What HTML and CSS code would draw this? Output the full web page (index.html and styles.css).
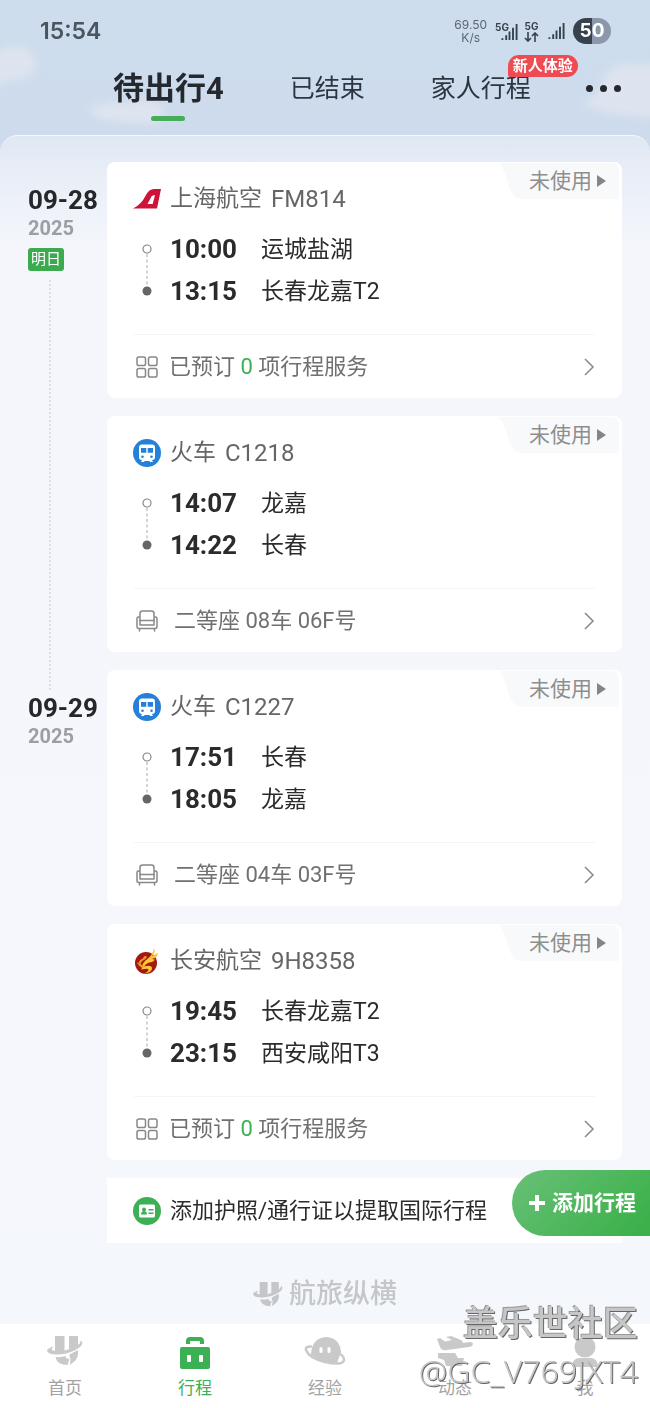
FILE: index.html
```html
<!DOCTYPE html>
<html lang="zh-CN">
<head>
<meta charset="utf-8">
<meta name="viewport" content="width=device-width, initial-scale=1">
<title>行程</title>
<link rel="stylesheet" href="styles.css">
</head>
<body>
<svg class="sprite" aria-hidden="true">
  <symbol id="i-grid" viewBox="0 0 24 24"><g fill="none" stroke="#888" stroke-width="1.5"><rect x="2" y="2" width="8.500" height="8.500" rx="1.8"/><rect x="13.500" y="2" width="8.500" height="8.500" rx="1.8"/><rect x="2" y="13.500" width="8.500" height="8.500" rx="1.8"/><rect x="13.500" y="13.500" width="8.500" height="8.500" rx="1.8"/></g></symbol>
  <symbol id="i-seat" viewBox="0 0 24 24"><g fill="none" stroke="#888" stroke-width="1.5" stroke-linejoin="round" stroke-linecap="round"><path d="M5 8V4.500Q5 2 7.500 2h9Q19 2 19 4.500V8"/><path d="M5 16V9.500Q5 8 3.500 8T2 9.500V17.500Q2 19.500 4 19.500H20Q22 19.500 22 17.500V9.500Q22 8 20.500 8T19 9.500V16Z"/><path d="M5 11.500h14M4.500 20v2M19.500 20v2"/></g></symbol>
  <symbol id="i-next" viewBox="0 0 12 20"><path d="M2 2l8 8-8 8" fill="none" stroke="#8c8c8c" stroke-width="1.6"/></symbol>
  <symbol id="i-train" viewBox="0 0 28 28"><circle cx="14" cy="14" r="14" fill="#2480d8"/><path d="M9 5.500h10q3 0 3 3V18q0 3-3 3l1 2h-3l-.5-1h-5l-.5 1H8l1-2q-3 0-3-3V8.500q0-3 3-3z" fill="#fff"/><path d="M8 9h5.300v4.700H8zM14.700 9H20v4.700h-5.300z" fill="#2480d8"/><circle cx="9.500" cy="17.700" r="1.300" fill="#2480d8"/><circle cx="18.500" cy="17.700" r="1.300" fill="#2480d8"/></symbol>
  <symbol id="i-fm" viewBox="0 0 28 28"><path d="M0 23.500Q8 20 13 10 16 4 21 4h7l-4 19.500z" fill="#cf1238"/><path d="M14.500 19l4-7.500q1-1.500 3.500-1.500l-2.300 9z" fill="#fff"/></symbol>
  <symbol id="i-9h" viewBox="0 0 28 28"><circle cx="13" cy="16" r="11" fill="#a51710"/><path d="M21 1q2 4-2 8l6-3q0 4-6 6l3 .5q-2 3-6 3-3 1-5 4 8-2 8 2 0 4-9 5.500 5-2 5.500-4 .5-2-7-.5 0-5 4-9 5-4 6-6 2-3 2.500-6.500z" fill="#fbc638"/><path d="M11 9.500q2-1 3 .5-1 2-4 3.500-3 2-2 5-2-1-2-4 1-2 4-3zM4 15l7 4.500-1 1.500q-5-2-6-6z" fill="#ee9a2a"/></symbol>
  <symbol id="i-route" viewBox="0 0 12 56"><circle cx="6" cy="7" r="4" fill="#fff" stroke="#888" stroke-width="1.200"/><path d="M6 12v32" stroke="#aaa" stroke-dasharray="3 2.500"/><circle cx="6" cy="49" r="4.500" fill="#666"/></symbol>
  <symbol id="i-signal" viewBox="0 0 18 18"><path d="M1.500 17v-2M5.500 17v-5M9 17V8M12.700 17V4M16.500 17V0" stroke="#38424c" stroke-width="2" fill="none"/></symbol>
  <symbol id="i-brand" viewBox="0 0 36 30"><g fill="currentColor"><path d="M8 0h9.500v15Q12 16.500 8 16zM22 0h9v10.500q-4 2-9 3.300z"/><path d="M7 10.500Q3 13 6 14.500 18 17 31 9q3-2 2.500-4.500 4 2.500-.5 6.500-8 6.500-21 7.500Q2 19 0 15q0-3 7-4.500z"/><path d="M8.500 21q6 .5 10-1 0 3 4 3l-2 6Q10 29 8.500 21zM22.500 18.500L31 14v4q0 6-8.500 11 1-3.500 1-6-1-1-1-4.500z"/></g></symbol>
  <symbol id="i-case" viewBox="0 0 32 34"><path d="M9 8V5q0-2 2-2h10q2 0 2 2v3" fill="none" stroke="currentColor" stroke-width="4"/><rect x="1" y="11" width="30" height="22" rx="2" fill="currentColor"/><rect x="8" y="19" width="4" height="7" rx="1" fill="#fff"/><rect x="20" y="19" width="4" height="7" rx="1" fill="#fff"/></symbol>
  <symbol id="i-planet" viewBox="0 0 42 30"><path d="M7 18Q8 2 22 1q14 1 15 15l-4 11Q18 27 7 19z" fill="currentColor"/><path d="M8 10.500Q1 10 2 14q3 8 19 12 18 4 19-2 0-4-4-6" fill="none" stroke="currentColor" stroke-width="2.500"/><rect x="15.500" y="11" width="3" height="6" rx="1.500" fill="#fff"/><rect x="23.500" y="11" width="3" height="6" rx="1.500" fill="#fff"/></symbol>
  <symbol id="i-plane" viewBox="0 0 36 32"><path d="M0 3l3-1 5 3.500 7-1.500L9 1l5-1 10 4q2 1 2 3l6-1q4 0 4 2-1 3-4 3L10 14q-5 1-7-3zM1 17h17l3 5h6l-2 8H9l-2-6-6-2z" fill="currentColor"/></symbol>
  <symbol id="i-me" viewBox="0 0 28 32"><circle cx="14" cy="11" r="10.500" fill="currentColor"/><path d="M1 31q0-9 8-9h10q8 0 8 9z" fill="currentColor"/></symbol>
</svg>

<header class="top">
  <svg class="clouds" viewBox="0 0 650 150" preserveAspectRatio="none" aria-hidden="true">
    <defs><filter id="soft"><feGaussianBlur stdDeviation="4"/></filter></defs>
    <g fill="#e3e7ef" filter="url(#soft)">
      <path d="M-9 56Q12 42 24 48 38 54 35 70 26 82 12 79L-9 88z" opacity=".75"/>
      <path d="M90 110Q92 101 103 106 112 99 125 104 150 96 162 106 168 118 155 124L125 122Q94 122 90 110z" opacity=".75"/>
      <path d="M582 105Q600 94 604 76 620 60 634 66L660 64V118L610 114z" opacity=".75"/>
    </g>
  </svg>
  <div class="status">
    <time class="clock">15:54</time>
    <span class="speed">69.50<br>K/s</span>
    <span class="net net-a"><b>5G</b><svg width="17" height="17"><use href="#i-signal"/></svg></span>
    <span class="net net-b"><b>5G</b><svg width="15" height="10" viewBox="0 0 15 10"><path d="M4 0v9M1 6l3 3 3-3M11 10V1M8 4l3-3 3 3" fill="none" stroke="#38424c" stroke-width="1.600"/></svg></span>
    <svg class="sig" width="17" height="17"><use href="#i-signal"/></svg>
    <span class="battery">50</span>
  </div>
  <nav class="tabs">
    <button class="tab tab-on">待出行4</button>
    <button class="tab">已结束</button>
    <button class="tab">家人行程<span class="promo">新人体验</span></button>
    <button class="more" aria-label="更多"><i></i><i></i><i></i></button>
  </nav>
</header>

<main class="sheet">
  <section class="day">
    <div class="rail">
      <h2 class="date">09-28</h2>
      <p class="year">2025</p>
      <span class="soon">明日</span>
      <span class="dots"></span>
    </div>
    <div class="cards">
      <article class="card">
        <button class="state">未使用</button>
        <h3 class="name"><svg class="logo"><use href="#i-fm"/></svg>上海航空<span class="code">FM814</span></h3>
        <div class="trip">
          <svg class="route"><use href="#i-route"/></svg>
          <dl class="stops"><dt>10:00</dt><dd>运城盐湖</dd><dt>13:15</dt><dd>长春龙嘉T2</dd></dl>
        </div>
        <a class="extra" href="#"><svg class="mini"><use href="#i-grid"/></svg><span>已预订 <em>0</em> 项行程服务</span><svg class="next"><use href="#i-next"/></svg></a>
      </article>
      <article class="card">
        <button class="state">未使用</button>
        <h3 class="name"><svg class="logo"><use href="#i-train"/></svg>火车<span class="code">C1218</span></h3>
        <div class="trip">
          <svg class="route"><use href="#i-route"/></svg>
          <dl class="stops"><dt>14:07</dt><dd>龙嘉</dd><dt>14:22</dt><dd>长春</dd></dl>
        </div>
        <a class="extra seat" href="#"><svg class="mini"><use href="#i-seat"/></svg><span>二等座 08车 06F号</span><svg class="next"><use href="#i-next"/></svg></a>
      </article>
    </div>
  </section>

  <section class="day">
    <div class="rail">
      <h2 class="date">09-29</h2>
      <p class="year">2025</p>
    </div>
    <div class="cards">
      <article class="card">
        <button class="state">未使用</button>
        <h3 class="name"><svg class="logo"><use href="#i-train"/></svg>火车<span class="code">C1227</span></h3>
        <div class="trip">
          <svg class="route"><use href="#i-route"/></svg>
          <dl class="stops"><dt>17:51</dt><dd>长春</dd><dt>18:05</dt><dd>龙嘉</dd></dl>
        </div>
        <a class="extra seat" href="#"><svg class="mini"><use href="#i-seat"/></svg><span>二等座 04车 03F号</span><svg class="next"><use href="#i-next"/></svg></a>
      </article>
      <article class="card">
        <button class="state">未使用</button>
        <h3 class="name"><svg class="logo"><use href="#i-9h"/></svg>长安航空<span class="code">9H8358</span></h3>
        <div class="trip">
          <svg class="route"><use href="#i-route"/></svg>
          <dl class="stops"><dt>19:45</dt><dd>长春龙嘉T2</dd><dt>23:15</dt><dd>西安咸阳T3</dd></dl>
        </div>
        <a class="extra" href="#"><svg class="mini"><use href="#i-grid"/></svg><span>已预订 <em>0</em> 项行程服务</span><svg class="next"><use href="#i-next"/></svg></a>
      </article>
      <a class="passport" href="#">
        <svg class="logo" viewBox="0 0 28 28"><circle cx="14" cy="14" r="14" fill="#3cb054"/><rect x="6" y="7.500" width="16" height="13" rx="1.500" fill="#fff"/><path d="M8 17.500q0-3 2-3-1-1-1-2 0-2 2-2t2 2q0 1-1 2 2 0 2 3zM15.500 12h5v1.500h-5zM15.500 15.500h5V17h-5z" fill="#3cb054"/></svg>
        <span>添加护照/通行证以提取国际行程</span>
      </a>
    </div>
  </section>
  <button class="fab"><svg width="18" height="18" viewBox="0 0 18 18" aria-hidden="true"><path d="M9 1v16M1 9h16" stroke="#fff" stroke-width="4"/></svg>添加行程</button>
  <p class="brand"><svg width="30" height="25"><use href="#i-brand"/></svg>航旅纵横</p>
</main>

<nav class="bar">
  <a class="item" href="#"><svg width="36" height="30"><use href="#i-brand"/></svg>首页</a>
  <a class="item item-on" href="#"><svg width="32" height="34"><use href="#i-case"/></svg>行程</a>
  <a class="item" href="#"><svg width="42" height="30"><use href="#i-planet"/></svg>经验</a>
  <a class="item" href="#"><svg width="36" height="32"><use href="#i-plane"/></svg>动态</a>
  <a class="item" href="#"><svg width="28" height="32"><use href="#i-me"/></svg>我</a>
</nav>
<div class="mark"><strong>盖乐世社区</strong><span>@GC_V769JXT4</span></div>
</body>
</html>
```
FILE: styles.css
```css
* { box-sizing: border-box; }
body {
  margin: 0;
  min-height: 100vh;
  display: flex;
  flex-direction: column;
  position: relative;
  background: linear-gradient(#cedded 0, #cddbed 150px, #f4f7fb 260px);
  font-family: Roboto, "Noto Sans CJK SC", sans-serif;
  color: #2b2b2d;
}
h2, h3, p, dl, dd { margin: 0; }
button { border: 0; padding: 0; background: none; font: inherit; color: inherit; }
a { color: inherit; text-decoration: none; }
em { font-style: normal; color: #3cb054; }
svg { display: block; flex: none; }
.sprite { position: absolute; width: 0; height: 0; }

.top { position: relative; }
.clouds { position: absolute; top: 0; left: 0; width: 100%; height: 150px; }
.status {
  position: relative;
  height: 62px;
  padding: 0 39px 0 40px;
  display: flex;
  align-items: center;
  color: #38424c;
  font-family: Inter, sans-serif;
}
.clock { margin-right: auto; font-size: 23px; font-weight: 600; color: #4a555f; }
.speed { font-size: 12px; line-height: 13px; text-align: center; color: #5b6670; }
.net b { font-size: 10px; line-height: 12px; font-weight: 700; }
.net-a { display: flex; align-items: flex-start; margin-left: 8px; }
.net-a svg { margin: 3px 0 0 -8px; }
.net-b { display: flex; flex-direction: column; align-items: center; margin-left: 6px; }
.sig { margin-left: 9px; }
.battery {
  margin-left: 8px;
  width: 38px;
  border-radius: 13px;
  background: linear-gradient(90deg, #38424c 50%, #8b98ab 50%);
  color: #fff;
  font-size: 19px;
  font-weight: 700;
  line-height: 26px;
  text-align: center;
}
.tabs {
  position: relative;
  height: 73px;
  padding: 0 29px 14px 113px;
  display: flex;
  align-items: flex-start;
}
.tab { position: relative; font-size: 25px; line-height: 54px; white-space: nowrap; color: #2d3640; }
.tab + .tab { margin-left: 66px; }
.tab-on { font-size: 31px; font-weight: 700; color: #25292e; }
.tab-on::after {
  content: "";
  display: block;
  width: 34px;
  height: 5px;
  margin: 0 auto;
  border-radius: 3px;
  background: #46ad58;
}
.promo {
  position: absolute;
  top: -7px;
  left: 77px;
  padding: 0 5px;
  border-radius: 11px 11px 11px 2px;
  background: #ee4b52;
  color: #fff;
  font-size: 15px;
  font-weight: 700;
  line-height: 22px;
}
.more { display: flex; gap: 7px; margin-left: auto; padding-top: 23px; }
.more i { width: 7px; height: 7px; border-radius: 50%; background: #25292e; }

.sheet {
  position: relative;
  flex: 1;
  padding: 26px 28px 0 0;
  border-top: 1px solid #f4f8fd;
  border-radius: 18px 18px 0 0;
  background: linear-gradient(#dfe7f3 0, #e6ecf6 24px, #f4f6fb 110px, #f4f7fb 100%);
}
.day { display: grid; grid-template-columns: 107px 1fr; margin-bottom: 18px; }
.rail { display: flex; flex-direction: column; align-items: flex-start; padding: 23px 0 0 28px; }
.date { font-size: 26px; line-height: 30px; font-weight: 700; color: #25272a; }
.year { font-size: 20px; line-height: 26px; font-weight: 700; color: #9b9ea5; }
.soon {
  margin-top: 7px;
  padding: 0 3px;
  border-radius: 3px;
  background: #3cab50;
  color: #fff;
  font-size: 15px;
  line-height: 23px;
}
.dots { flex: 1; margin: 9px 0 -38px 21px; border-left: 2px dotted #dcdfe3; }
.cards { display: flex; flex-direction: column; gap: 18px; }
.card { position: relative; padding: 18px 27px 0; border-radius: 8px; background: #fff; }
.state {
  position: absolute;
  top: 1px;
  right: 2px;
  padding: 0 14px 0 30px;
  display: flex;
  align-items: center;
  gap: 5px;
  background: #f7f9fa;
  clip-path: path("M0 0H112Q120 0 120 8V36H23Q14 36 10 24Q5 5 0 0z");
  font-size: 21px;
  line-height: 36px;
  color: #8e8e8e;
}
.state::after { content: ""; border: 6px solid transparent; border-left: 9px solid #858585; border-right: 0; }
.name {
  display: flex;
  align-items: center;
  gap: 9px;
  font-size: 23px;
  line-height: 38px;
  font-weight: 400;
  color: #666;
}
.code { font-size: 24px; }
.logo { width: 28px; height: 28px; margin-left: -1px; }
.trip { display: flex; gap: 17px; margin: 10px 0 22px; padding-left: 7px; }
.route { width: 12px; height: 56px; margin-top: 14px; }
.stops { display: grid; grid-template-columns: auto 1fr; column-gap: 24px; line-height: 42px; }
.stops dt { font-size: 26px; font-weight: 700; }
.stops dd { font-size: 23px; padding-top: 1px; line-height: 41px; }
.extra {
  display: flex;
  align-items: center;
  gap: 10px;
  padding-left: 1px;
  border-top: 1px solid #f5f5f6;
  font-size: 22px;
  line-height: 63px;
  color: #707070;
}
.seat { gap: 15px; }
.mini { width: 24px; height: 24px; }
.next { width: 12px; height: 20px; margin-left: auto; }
.passport {
  padding-left: 27px;
  display: flex;
  align-items: center;
  gap: 9px;
  background: #fff;
  font-size: 22px;
  line-height: 65px;
  white-space: nowrap;
}
.fab {
  position: absolute;
  right: 0;
  bottom: 88px;
  padding: 0 14px 0 16px;
  display: flex;
  align-items: center;
  gap: 6px;
  border-radius: 33px 0 0 33px;
  background: linear-gradient(135deg, #69c078, #3cb14b 90%);
  color: #fff;
  font-size: 21px;
  line-height: 66px;
  font-weight: 700;
}
.brand {
  display: flex;
  align-items: center;
  justify-content: center;
  gap: 6px;
  margin: 32px 0 11px 28px;
  font-size: 27px;
  line-height: 38px;
  font-weight: 500;
  color: #c4c6ca;
}
.bar { display: flex; height: 84px; padding-top: 12px; background: #fff; }
.item {
  flex: 1;
  display: flex;
  flex-direction: column;
  align-items: center;
  justify-content: space-between;
  padding-bottom: 8px;
  font-size: 17px;
  line-height: 24px;
  color: #a2a2a2;
}
.item svg { color: #c9c9c9; }
.item-on, .item-on svg { color: #3cb054; }
.mark {
  position: absolute;
  right: 12px;
  bottom: 14px;
  display: flex;
  flex-direction: column;
  align-items: flex-end;
  color: #c6c6c6;
  text-shadow: 1px 1px 0 #666, -1px -1px 0 #999;
  line-height: 46px;
  pointer-events: none;
}
.mark strong { font-size: 35px; font-weight: 500; }
.mark span { font-family: "Noto Sans", sans-serif; font-size: 32px; font-weight: 300; text-shadow: 1px 1px 0 #666; }
```
